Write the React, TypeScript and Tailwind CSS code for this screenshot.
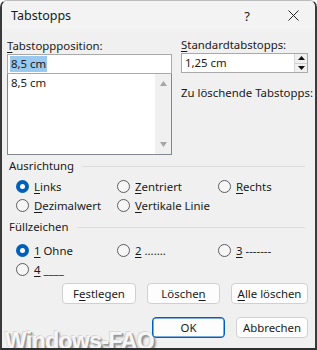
import React from "react";

const U = ({ c }: { c: string }) => <span className="underline underline-offset-[2px] decoration-[1px]">{c}</span>;

function Radio({ checked }: { checked?: boolean }) {
  return checked ? (
    <span className="w-[13px] h-[13px] rounded-full bg-[#005fb8] flex items-center justify-center shrink-0">
      <span className="w-[5px] h-[5px] rounded-full bg-white" />
    </span>
  ) : (
    <span className="w-[13px] h-[13px] rounded-full border border-[#5c5c5c] bg-[#f6f6f6] shrink-0" />
  );
}

function RadioItem({ checked, children, w }: { checked?: boolean; children: React.ReactNode; w: string }) {
  return (
    <div className={`flex items-center gap-[5px] shrink-0 ${w}`}>
      <Radio checked={checked} />
      <span className="leading-[16px] whitespace-nowrap">{children}</span>
    </div>
  );
}

function Btn({ children, w, primary }: { children: React.ReactNode; w: string; primary?: boolean }) {
  return (
    <div
      className={`relative h-[21px] shrink-0 ${w} rounded-[4px] bg-[#fdfdfd] flex items-center justify-center leading-[16px] whitespace-nowrap ${
        primary ? "border border-[#005fb8] shadow-[inset_0_0_0_0.5px_#005fb8]" : "border border-[#d0d0d0]"
      }`}
    >
      {children}
    </div>
  );
}

function GroupHeader({ title }: { title: string }) {
  return (
    <div className="flex items-center gap-[8px] h-[16px]">
      <span className="leading-[16px]">{title}</span>
      <div className="flex-1 h-px bg-[#dcdcdc] mr-[3px]" />
    </div>
  );
}

export default function App() {
  return (
    <div
      className="w-[317px] h-[350px] relative overflow-hidden bg-[#f0f0f0] text-[#1a1a1a] text-[11.4px] rounded-t-[7px] border-t border-t-[#bdbdbd] border-x-2 border-x-[#3a3a3a] border-b-2 border-b-[#2e2e2e]"
      style={{ fontFamily: '"Noto Sans", "Open Sans", sans-serif' }}
    >
      {/* watermark */}
      <div
        className="absolute left-[3px] top-[328px] text-[23px] font-bold text-[#f6f6f6] tracking-[-0.6px] leading-[24px] pointer-events-none"
        style={{
          fontFamily: '"Liberation Sans", Arial, sans-serif',
          textShadow: "1px 1px 0 #9a9a9a, -1px -1px 0 #d8d8d8, 2px 2px 2px #8a8a8a",
        }}
      >
        Windows-FAQ
      </div>

      {/* title bar */}
      <div className="h-[29px] flex items-center bg-[#f3f3f3] pl-[9px]">
        <span className="text-[12.5px] leading-[16px]">Tabstopps</span>
        <div className="flex-1" />
        <span className="text-[13px] leading-[16px] mr-[38px]">?</span>
        <svg width="11" height="11" viewBox="0 0 11 11" className="mr-[16px]">
          <path d="M0.5 0.5 L10.5 10.5 M10.5 0.5 L0.5 10.5" stroke="#222" strokeWidth="1" />
        </svg>
      </div>

      <div className="relative pl-[5px] pr-[7px]">
        {/* top area */}
        <div className="flex mt-[8px]">
          <div className="w-[165px] shrink-0 flex flex-col">
            <div className="leading-[16px] h-[16px]">
              <U c="T" />abstoppposition:
            </div>
            <div className="h-[20px] bg-white border border-[#a9a9a9] flex items-center pl-[2px]">
              <span className="bg-[#99c9ef] leading-[16px] px-[1px]">8,5 cm</span>
            </div>
            <div className="h-[81px] bg-white border border-[#828790] border-t-0 flex">
              <div className="flex-1 pl-[3px] pt-[1px] leading-[16px]">8,5 cm</div>
              <div className="w-[16px] bg-[#f0f0f0] flex flex-col items-center justify-between py-[7px]">
                <svg width="7" height="5" viewBox="0 0 7 5"><path d="M0 5 L3.5 0 L7 5 Z" fill="#a6a6a6" /></svg>
                <svg width="7" height="5" viewBox="0 0 7 5"><path d="M0 0 L3.5 5 L7 0 Z" fill="#a6a6a6" /></svg>
              </div>
            </div>
          </div>
          <div className="ml-[9px] flex-1 min-w-0 flex flex-col">
            <div className="leading-[16px] h-[16px] -mt-[1px] whitespace-nowrap">
              <U c="S" />tandardtabstopps:
            </div>
            <div className="h-[20px] bg-white border border-[#a9a9a9] flex items-center">
              <span className="flex-1 pl-[3px] leading-[16px]">1,25 cm</span>
              <div className="w-[13px] h-full flex flex-col border-l border-[#d8d8d8] bg-[#f0f0f0]">
                <div className="flex-1 flex items-center justify-center border-b border-[#d0d0d0]">
                  <svg width="7" height="4" viewBox="0 0 7 4"><path d="M0 4 L3.5 0 L7 4 Z" fill="#111" /></svg>
                </div>
                <div className="flex-1 flex items-center justify-center">
                  <svg width="7" height="4" viewBox="0 0 7 4"><path d="M0 0 L3.5 4 L7 0 Z" fill="#111" /></svg>
                </div>
              </div>
            </div>
            <div className="leading-[16px] mt-[12px] whitespace-nowrap">Zu löschende Tabstopps:</div>
          </div>
        </div>

        {/* Ausrichtung */}
        <div className="mt-[3px] pl-[2px]">
          <GroupHeader title="Ausrichtung" />
        </div>
        <div className="pl-[9px] mt-[3px]">
          <div className="flex h-[19px] items-center">
            <RadioItem checked w="w-[101px]"><U c="L" />inks</RadioItem>
            <RadioItem w="w-[101px]"><U c="Z" />entriert</RadioItem>
            <RadioItem w="w-[80px]"><U c="R" />echts</RadioItem>
          </div>
          <div className="flex h-[19px] items-center">
            <RadioItem w="w-[101px]"><U c="D" />ezimalwert</RadioItem>
            <RadioItem w="w-[140px]"><U c="V" />ertikale Linie</RadioItem>
          </div>
        </div>

        {/* Füllzeichen */}
        <div className="mt-[4px] pl-[2px]">
          <GroupHeader title="Füllzeichen" />
        </div>
        <div className="pl-[9px] mt-[6px]">
          <div className="flex h-[19px] items-center">
            <RadioItem checked w="w-[101px]"><U c="1" /> Ohne</RadioItem>
            <RadioItem w="w-[101px]"><U c="2" /> .......</RadioItem>
            <RadioItem w="w-[80px]"><U c="3" /> -------</RadioItem>
          </div>
          <div className="flex h-[19px] items-center">
            <RadioItem w="w-[101px]"><U c="4" /> ____</RadioItem>
          </div>
        </div>

        {/* buttons */}
        <div className="flex justify-end gap-[11px] mt-[4px]">
          <Btn w="w-[74px]">F<U c="e" />stlegen</Btn>
          <Btn w="w-[73px]">Lösche<U c="n" /></Btn>
          <Btn w="w-[77px]"><U c="A" />lle löschen</Btn>
        </div>
        <div className="flex justify-end gap-[11px] mt-[13px]">
          <Btn w="w-[73px]" primary>OK</Btn>
          <Btn w="w-[72px]">Abbrechen</Btn>
        </div>
      </div>
    </div>
  );
}
